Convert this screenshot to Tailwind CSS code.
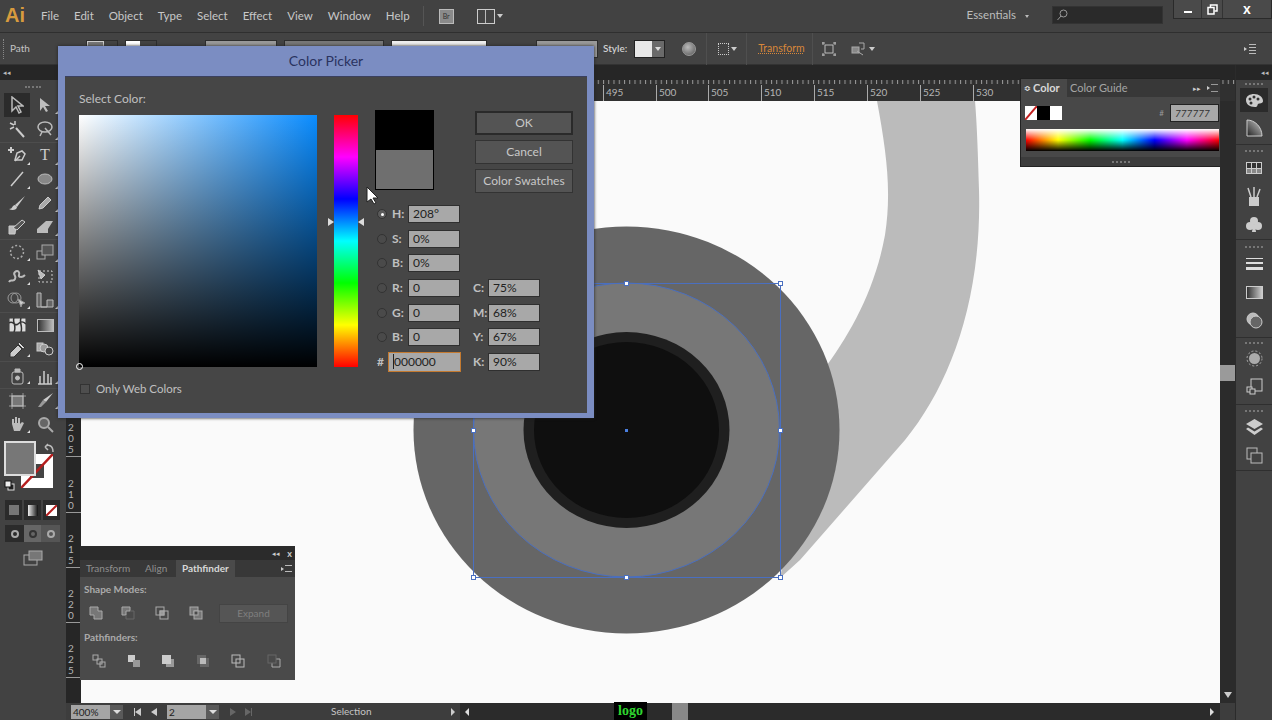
<!DOCTYPE html>
<html lang="en">
<head>
  <meta charset="UTF-8">
  <title>Color Picker</title>
  <script src="https://cdn.jsdelivr.net/npm/@tailwindcss/browser@4"></script>
</head>
<body class="bg-[#3f3f3f]">
<div class="relative w-[1272px] h-[720px] overflow-hidden flex flex-col bg-[#424242] text-[#c4c4c4] text-[11px] font-['Lato',sans-serif]">

  <!-- menu bar -->
  <header class="h-[33px] shrink-0 flex items-center bg-[#424242] border-b border-[#2f2f2f]">
    <span class="ml-[5px] w-[36px] text-[20px] font-bold text-[#d89b3e] leading-none font-['Liberation_Sans',sans-serif] -mt-[2px]">Ai</span>
    <nav class="flex gap-[15px] text-[11.5px] text-[#c8c8c8]">
      <span>File</span><span>Edit</span><span>Object</span><span>Type</span><span>Select</span><span>Effect</span><span>View</span><span>Window</span><span>Help</span>
    </nav>
    <div class="ml-[13px] h-[20px] w-px bg-[#555]"></div>
    <div class="ml-[15px] w-[15px] h-[15px] bg-[#8a8a8a] border border-[#bbb] text-[7px] text-[#333] flex items-center justify-center">Br</div>
    <div class="ml-[23px] w-[18px] h-[15px] border border-[#ccc] bg-[#bbb] grid grid-cols-2 gap-px">
      <span class="bg-[#444]"></span><span class="bg-[#444]"></span>
    </div>
    <span class="ml-[2px] w-0 h-0 border-x-[3px] border-x-transparent border-t-[4px] border-t-[#ccc]"></span>
    <div class="ml-auto flex items-center self-start h-full">
      <span class="text-[11.5px] text-[#bdbdbd] mt-[-2px]">Essentials</span>
      <span class="ml-[9px] w-0 h-0 border-x-[2px] border-x-transparent border-t-[3px] border-t-[#bbb]"></span>
      <div class="ml-[23px] w-[111px] h-[18px] bg-[#2a2a2a] border border-[#333] flex items-center pl-[3px] mt-[-2px]">
        <svg width="12" height="12" viewBox="0 0 12 12" fill="none" stroke="#999"><circle cx="7.5" cy="4.5" r="3.5"/><path d="M5 7 1.5 11"/></svg>
      </div>
      <div class="ml-[10px] w-[99px] h-[19px] self-start flex bg-[#4a4a4a] border border-t-0 border-[#2a2a2a] text-white">
        <div class="w-[27px] flex items-center justify-center"><span class="block w-[8px] h-[2px] bg-white mt-[5px]"></span></div>
        <div class="w-[22px] flex items-center justify-center border-x border-[#333]">
          <svg width="11" height="11" viewBox="0 0 11 11" fill="none" stroke="#fff" stroke-width="1.5"><path d="M3.5 3V1h6.500v6H7.500"/><rect x="1" y="3.500" width="6" height="6.500"/></svg>
        </div>
        <div class="flex-1 flex items-center justify-center text-[14px] font-bold leading-none font-['Liberation_Sans',sans-serif]">x</div>
      </div>
    </div>
  </header>

  <!-- control bar -->
  <div class="h-[32px] shrink-0 flex items-center bg-[#434343] border-b border-[#333] relative">
    <span class="ml-[3px] w-[2px] h-[20px] border-l border-dotted border-[#888]"></span>
    <span class="ml-[5px] text-[10px] text-[#c4c4c4]">Path</span>
    <div class="ml-[56px] flex h-[18px] w-[32px] border border-[#2d2d2d]"><span class="w-[17px] bg-[#777] border border-[#ccc]"></span></div>
    <div class="ml-[7px] flex h-[18px] w-[32px] border border-[#2d2d2d]"><span class="w-[14px] bg-white"></span></div>
    <div class="ml-[48px] h-[18px] w-[72px] bg-[#999] border border-[#2d2d2d]"></div>
    <div class="ml-[7px] h-[18px] w-[100px] bg-[#777] border border-[#2d2d2d]"></div>
    <div class="ml-[7px] h-[18px] w-[96px] bg-[#eee] border border-[#2d2d2d]"></div>
    <div class="ml-[49px] h-[18px] w-[62px] bg-[#999] border border-[#2d2d2d]"></div>
    <span class="ml-[5px] text-[10px] text-[#d0d0d0] font-semibold">Style:</span>
    <div class="ml-[7px] flex h-[18px] w-[31px] border border-[#222]">
      <span class="w-[17px] bg-[#e8e8e8]"></span>
      <span class="flex-1 bg-[#6a6a6a] flex items-center justify-center"><span class="w-0 h-0 border-x-[3px] border-x-transparent border-t-[4px] border-t-[#ddd]"></span></span>
    </div>
    <div class="ml-[17px] w-[14px] h-[14px] rounded-full bg-[radial-gradient(circle_at_40%_35%,#bbb,#555)] border border-[#999]"></div>
    <span class="ml-[10px] h-[32px] w-px bg-[#4f4f4f]"></span>
    <div class="ml-[11px] w-[11px] h-[12px] border border-dotted border-[#ccc]"></div>
    <span class="ml-[2px] w-0 h-0 border-x-[3px] border-x-transparent border-t-[4px] border-t-[#ccc]"></span>
    <span class="ml-[9px] h-[32px] w-px bg-[#4f4f4f]"></span>
    <span class="ml-[11px] text-[10.5px] text-[#d8873a] underline decoration-dotted">Transform</span>
    <span class="ml-[7px] h-[32px] w-px bg-[#4f4f4f]"></span>
    <svg class="ml-[9px]" width="14" height="14" viewBox="0 0 14 14" fill="none" stroke="#bbb"><rect x="3" y="3" width="8" height="8"/><path d="M0 1h3M1 0v3M11 1h3M13 0v3M0 13h3M1 11v3M11 13h3M13 11v3"/></svg>
    <svg class="ml-[15px]" width="15" height="14" viewBox="0 0 15 14" fill="none" stroke="#aaa"><rect x="1" y="5" width="7" height="6" fill="#888"/><path d="M8 1h5v6h-3M6 9l6 4"/></svg>
    <span class="ml-[3px] w-0 h-0 border-x-[3px] border-x-transparent border-t-[4px] border-t-[#ccc]"></span>
    <div class="ml-auto mr-[16px] flex items-center gap-[2px]">
      <span class="w-0 h-0 border-y-[2px] border-y-transparent border-l-[3px] border-l-[#ccc]"></span>
      <span class="flex flex-col gap-[2px]"><span class="block w-[7px] h-px bg-[#bbb]"></span><span class="block w-[7px] h-px bg-[#bbb]"></span><span class="block w-[7px] h-px bg-[#bbb]"></span><span class="block w-[7px] h-px bg-[#bbb]"></span></span>
    </div>
  </div>

  <div class="flex-1 flex min-h-0">
    <!-- tools -->
    <aside class="w-[66px] shrink-0 bg-[#424242] flex flex-col">
      <div class="h-[15px] bg-[#262626] text-[7px] text-[#bbb] pl-[3px] leading-[14px]">◂◂</div>
      <div class="h-[13px] flex justify-center items-center"><span class="w-[16px] h-[2px] border-t-2 border-dotted border-[#777]"></span></div>
      <div class="flex flex-col pt-[0px] text-[#bdbdbd]">
        <div class="grid grid-cols-[34px_22px] auto-rows-[24px] border-b border-[#4d4d4d] justify-items-center items-center pb-[1px]">
          <div class="w-[26px] h-[24px] bg-[#2b2b2b] flex items-center justify-center"><svg width="14" height="18" viewBox="0 0 14 18" fill="none" stroke="#bbb" stroke-width="1.500"><path d="M2 1v14l4-4 3 6 2-1-3-6h5z"/></svg></div>
          <svg width="14" height="16" viewBox="0 0 14 16" fill="#bdbdbd"><path d="M2 1v13l3-4 3 5 2-1-3-5h5z"/></svg>
          <svg width="18" height="18" viewBox="0 0 18 18" fill="none" stroke="#ccc" stroke-width="2"><path d="M8 8l8 9"/><path d="M2 3l4 2M7 1v4M2 9l4-2" stroke-width="1.500"/></svg>
          <svg width="18" height="16" viewBox="0 0 18 16" fill="none" stroke="#bbb" stroke-width="1.500"><ellipse cx="9" cy="6" rx="7" ry="5"/><path d="M9 7l6 7M6 11l-2 4"/></svg>
        </div>
        <div class="grid grid-cols-[34px_22px] auto-rows-[24px] border-b border-[#4d4d4d] justify-items-center items-center">
          <svg width="20" height="18" viewBox="0 0 20 18" fill="none" stroke="#ccc" stroke-width="1.500"><path d="M1 4h6M4 1v6" stroke-width="2"/><path d="M8 14l2-7 5-2 3 3-3 6z"/><path d="M8 15l5-5"/></svg>
          <span class="text-[16px] leading-none font-['Liberation_Serif',serif] text-[#ccc]">T</span>
          <svg width="16" height="16" viewBox="0 0 16 16" stroke="#ccc" stroke-width="1.500"><path d="M2 15 14 1"/></svg>
          <svg width="16" height="12" viewBox="0 0 16 12" fill="#888" stroke="#bbb"><ellipse cx="8" cy="6" rx="7" ry="5"/></svg>
          <svg width="18" height="16" viewBox="0 0 18 16" fill="#ccc"><path d="M17 1 7 10l2 2z"/><path d="M7 10c-3 0-2 4-6 4 3 2 8 1 8-2z"/></svg>
          <svg width="16" height="16" viewBox="0 0 16 16" fill="#aaa" stroke="#ccc"><path d="M2 14l1-4 8-8 3 3-8 8z"/></svg>
          <svg width="18" height="16" viewBox="0 0 18 16" fill="#bbb" stroke="#ccc"><path d="M1 7h7l-1 8H1z"/><path d="M5 9l9-8 3 2-8 8z" fill="#555"/></svg>
          <svg width="18" height="14" viewBox="0 0 18 14" fill="#bbb"><path d="M1 9l9-8h7l-5 8v4H1z"/></svg>
        </div>
        <div class="grid grid-cols-[34px_22px] auto-rows-[24px] border-b border-[#4d4d4d] justify-items-center items-center">
          <svg width="16" height="16" viewBox="0 0 16 16" fill="none" stroke="#aaa" stroke-width="1.500" stroke-dasharray="2 2"><circle cx="8" cy="8" r="6.500"/></svg>
          <svg width="18" height="16" viewBox="0 0 18 16" fill="none" stroke="#aaa"><rect x="1" y="7" width="8" height="8"/><rect x="6" y="1" width="11" height="10" fill="#555"/></svg>
          <svg width="18" height="16" viewBox="0 0 18 16" fill="none" stroke="#bbb" stroke-width="2"><path d="M1 14c2-4 4 1 6-3s-3-4 0-7 5 1 4 3 3 3 6 0"/></svg>
          <svg width="18" height="16" viewBox="0 0 18 16" fill="none" stroke="#ccc"><rect x="3" y="3" width="13" height="11" stroke-dasharray="2 2"/><path d="M2 2l7 5-4 4z" fill="#bbb"/></svg>
          <svg width="20" height="16" viewBox="0 0 20 16" fill="none" stroke="#999"><circle cx="6" cy="6" r="5"/><circle cx="9" cy="6" r="5"/><path d="M11 7l7 4-3 1-1 3z" fill="#ccc"/></svg>
          <svg width="18" height="16" viewBox="0 0 18 16" fill="none" stroke="#bbb"><path d="M1 15V1h4v14h6V8h6v7z" fill="#666"/></svg>
        </div>
        <div class="grid grid-cols-[34px_22px] auto-rows-[24px] border-b border-[#4d4d4d] justify-items-center items-center">
          <svg width="17" height="14" viewBox="0 0 17 14" fill="#ddd" stroke="#333"><rect width="17" height="14"/><path d="M0 5c4-3 6 4 9 1s5-3 8 0M5 0c-2 4 3 8 0 14M12 0c-2 5 2 8 0 14" fill="none" stroke-width="1.500"/></svg>
          <div class="w-[17px] h-[13px] border border-[#bbb] bg-[linear-gradient(to_right,#333,#bbb)]"></div>
          <svg width="17" height="17" viewBox="0 0 17 17" fill="#ccc" stroke="#333"><path d="M9 4l4 4-8 8H1v-4z"/><path d="M10 1l6 6-2 1-5-5z" fill="#ddd"/></svg>
          <svg width="18" height="14" viewBox="0 0 18 14" fill="#999" stroke="#ccc"><rect x="1" y="1" width="6" height="8" fill="#aaa"/><circle cx="8" cy="6" r="4"/><circle cx="13" cy="9" r="4" fill="#444"/></svg>
        </div>
        <div class="grid grid-cols-[34px_22px] h-[27px] border-b border-[#4d4d4d] justify-items-center items-end pb-[3px]">
          <svg width="13" height="17" viewBox="0 0 13 17" fill="none" stroke="#bbb"><rect x="1" y="4" width="11" height="12" rx="2"/><circle cx="6.500" cy="10" r="2" fill="#bbb"/><path d="M4 1h5v3H4z" fill="#bbb"/></svg>
          <svg width="16" height="16" viewBox="0 0 16 16" fill="none" stroke="#ccc" stroke-width="1.500"><path d="M1 15h14M3 15V7M7 15V2M11 15V5M14 15V8"/></svg>
        </div>
        <div class="grid grid-cols-[34px_22px] h-[23px] justify-items-center items-center">
          <svg width="17" height="16" viewBox="0 0 17 16" fill="#777" stroke="#bbb"><rect x="3" y="3" width="11" height="10"/><path d="M0 3h17M0 13h17M3 0v16M14 0v16" stroke-width=".7"/></svg>
          <svg width="17" height="15" viewBox="0 0 17 15" fill="#ccc"><path d="M16 0 6 7l3 2z"/><path d="M6 7 1 14h3l5-5z" fill="#999"/></svg>
        </div>
        <div class="grid grid-cols-[34px_22px] h-[24px] justify-items-center items-center">
          <svg width="17" height="18" viewBox="0 0 17 18" fill="#bbb"><path d="M3 9V4h2v4h1V2h2v6h1V3h2v6l2-2 2 1-4 8H5z"/></svg>
          <svg width="17" height="17" viewBox="0 0 17 17" fill="none" stroke="#aaa" stroke-width="2"><circle cx="7" cy="7" r="5" fill="#666"/><path d="M11 11l5 5"/></svg>
        </div>
        <!-- fill and stroke -->
        <div class="relative h-[58px] mt-[5px]">
          <div class="absolute left-[21px] top-[13px] w-[32px] h-[34px] bg-white flex items-center justify-center">
            <span class="w-[14px] h-[14px] bg-[#444]"></span>
            <svg class="absolute inset-0" width="32" height="34" viewBox="0 0 32 34"><path d="M0 34 32 0" stroke="#b51d1d" stroke-width="2.500"/></svg>
          </div>
          <div class="absolute left-[4px] top-0 w-[32px] h-[35px] bg-[#777] border-2 border-[#ddd]"></div>
          <svg class="absolute left-[44px] top-[2px]" width="12" height="11" viewBox="0 0 12 11" fill="none" stroke="#bbb" stroke-width="1.500"><path d="M1 4c3-3 8-2 8 5M1 4l3-3M1 4l3 3"/></svg>
          <svg class="absolute left-[4px] top-[39px]" width="11" height="11" viewBox="0 0 11 11" stroke="#111" fill="#eee"><rect x="4" y="4" width="6" height="6" fill="#222" stroke="#ddd"/><rect x="1" y="1" width="6" height="6"/></svg>
        </div>
        <div class="flex gap-[2px] pl-[5px] h-[20px] mt-[1px]">
          <div class="w-[17px] bg-[#2b2b2b] flex items-center justify-center"><span class="w-[10px] h-[10px] bg-[#777]"></span></div>
          <div class="w-[17px] bg-[#2b2b2b] flex items-center justify-center"><span class="w-[10px] h-[11px] bg-[linear-gradient(to_right,#eee,#111)]"></span></div>
          <div class="w-[17px] bg-[#2b2b2b] flex items-center justify-center"><svg width="11" height="11"><rect width="11" height="11" fill="#fff"/><path d="M0 11 11 0" stroke="#b51d1d" stroke-width="2"/></svg></div>
        </div>
        <div class="flex pl-[5px] h-[17px] mt-[5px]">
          <div class="w-[19px] bg-[#2b2b2b] flex items-center justify-center"><span class="w-[8px] h-[8px] rounded-full border-2 border-[#aaa]"></span></div>
          <div class="w-[17px] bg-[#666] flex items-center justify-center"><span class="w-[8px] h-[8px] rounded-full border-2 border-[#333]"></span></div>
          <div class="w-[19px] bg-[#555] flex items-center justify-center"><span class="w-[8px] h-[8px] rounded-full border-2 border-[#aaa]"></span></div>
        </div>
        <div class="flex justify-center mt-[8px]">
          <svg width="20" height="16" viewBox="0 0 20 16" stroke="#aaa" fill="#777"><rect x="1" y="5" width="13" height="10" fill="#424242"/><rect x="6" y="1" width="13" height="9"/></svg>
        </div>
      </div>
    </aside>

    <!-- document window -->
    <main class="flex-1 min-w-0 flex flex-col bg-[#262626]">
      <div class="h-[15px] shrink-0 bg-[#262626]"></div>
      <svg class="h-[21px] w-full shrink-0 bg-[#303030]" viewBox="66 80 1169 21" width="1169" height="21">
        <defs>
          <pattern id="rt" x="603" y="0" width="5.25" height="21" patternUnits="userSpaceOnUse"><path d="M.5 17v4" stroke="#999"/></pattern>
        </defs>
        <rect x="66" y="80" width="1169" height="21" fill="url(#rt)"/>
        <g stroke="#aaa"><path d="M603.500 85v16M656.500 85v16M708.500 85v16M761.500 85v16M814.500 85v16M867.500 85v16M920.500 85v16M973.500 85v16"/></g>
        <g fill="#b5b5b5" font-size="10" font-family="Lato,sans-serif">
          <text x="606" y="96">495</text><text x="659" y="96">500</text><text x="711" y="96">505</text><text x="764" y="96">510</text><text x="817" y="96">515</text><text x="870" y="96">520</text><text x="923" y="96">525</text><text x="976" y="96">530</text>
        </g>
      </svg>
      <div class="flex-1 min-h-0 flex">
        <svg class="w-[15px] shrink-0 bg-[#262626]" width="15" height="602" viewBox="66 101 15 602">
          <g stroke="#999"><path d="M66 456.500h15M66 512.500h15M66 567.500h15M66 622.500h15M66 677.500h15"/></g>
          <g fill="#b5b5b5" font-size="10" font-family="Lato,sans-serif" text-anchor="middle">
            <text x="71" y="431">2</text><text x="71" y="442">0</text><text x="71" y="453">5</text>
            <text x="71" y="487">2</text><text x="71" y="498">1</text><text x="71" y="509">0</text>
            <text x="71" y="542">2</text><text x="71" y="553">1</text><text x="71" y="564">5</text>
            <text x="71" y="597">2</text><text x="71" y="608">2</text><text x="71" y="619">0</text>
            <text x="71" y="652">2</text><text x="71" y="663">2</text><text x="71" y="674">5</text>
          </g>
        </svg>
        <div class="flex-1 min-w-0 bg-[#fafafa]">
          <svg class="block" width="1139" height="602" viewBox="81 101 1139 602">
            <path d="M877 101C886 150 892 190 885 235 875 290 850 335 822 372L780 578 800 560 905 440C950 385 982 300 979 190 978 155 977 125 975 101Z" fill="#bbbbbb"/>
            <ellipse cx="626.500" cy="430" rx="213" ry="203.500" fill="#666666"/>
            <ellipse cx="626.500" cy="430" rx="153" ry="147" fill="#777777" stroke="#4a6fc0"/>
            <ellipse cx="626.500" cy="430" rx="103" ry="98" fill="#1f1f1f"/>
            <ellipse cx="626.500" cy="430" rx="92.500" ry="88" fill="#0f0f0f"/>
            <path d="M473.500 283.500H780.500V577.500H473.500Z" fill="none" stroke="#4a6fc0"/>
            <g fill="#fff" stroke="#4a6fc0">
              <rect x="471.500" y="281.500" width="4" height="4"/><rect x="624.500" y="281.500" width="4" height="4"/><rect x="778.500" y="281.500" width="4" height="4"/>
              <rect x="471.500" y="428.500" width="4" height="4"/><rect x="778.500" y="428.500" width="4" height="4"/>
              <rect x="471.500" y="575.500" width="4" height="4"/><rect x="624.500" y="575.500" width="4" height="4"/><rect x="778.500" y="575.500" width="4" height="4"/>
            </g>
            <rect x="625" y="429" width="3" height="3" fill="#4a7fe0"/>
          </svg>
        </div>
        <div class="w-[15px] shrink-0 bg-[#2b2b2b] flex flex-col items-center pt-[264px]">
          <div class="w-[15px] h-[16px] bg-[#9a9a9a]"></div>
          <span class="mt-auto mb-[5px] w-0 h-0 border-x-[4px] border-x-transparent border-t-[6px] border-t-[#ccc]"></span>
        </div>
      </div>
      <!-- status bar -->
      <div class="h-[17px] shrink-0 flex items-center bg-[#2b2b2b] text-[#bbb] text-[10px]">
        <div class="w-[394px] h-full bg-[#3d3d3d] flex items-center shrink-0">
          <div class="ml-[5px] w-[39px] h-[14px] bg-[#a5a5a5] text-[#222] pl-[2px] leading-[14px]">400%</div>
          <div class="w-[13px] h-[14px] bg-[#5a5a5a] flex items-center justify-center"><span class="w-0 h-0 border-x-[4px] border-x-transparent border-t-[4px] border-t-[#ddd]"></span></div>
          <span class="ml-[11px] w-px h-[8px] bg-[#ccc]"></span>
          <span class="w-0 h-0 border-y-[4px] border-y-transparent border-r-[6px] border-r-[#ccc]"></span>
          <span class="ml-[10px] w-0 h-0 border-y-[4px] border-y-transparent border-r-[6px] border-r-[#ccc]"></span>
          <div class="ml-[10px] w-[39px] h-[14px] bg-[#a5a5a5] text-[#222] pl-[2px] leading-[14px]">2</div>
          <div class="w-[13px] h-[14px] bg-[#5a5a5a] flex items-center justify-center"><span class="w-0 h-0 border-x-[4px] border-x-transparent border-t-[4px] border-t-[#ddd]"></span></div>
          <span class="ml-[11px] w-0 h-0 border-y-[4px] border-y-transparent border-l-[6px] border-l-[#666]"></span>
          <span class="ml-[9px] w-0 h-0 border-y-[4px] border-y-transparent border-l-[6px] border-l-[#666]"></span>
          <span class="w-px h-[8px] bg-[#666]"></span>
          <span class="ml-[79px] text-[#c4c4c4]">Selection</span>
          <span class="ml-auto mr-[5px] w-0 h-0 border-y-[4px] border-y-transparent border-l-[4px] border-l-[#ccc]"></span>
        </div>
        <span class="ml-[5px] w-0 h-0 border-y-[4px] border-y-transparent border-r-[4px] border-r-[#ddd]"></span>
        <div class="ml-[145px] w-[33px] h-[18px] -mt-[1px] bg-black text-[#2fd42f] text-[14px] font-bold text-center leading-[17px] font-['Liberation_Serif',serif]">logo</div>
        <div class="ml-[25px] w-[16px] h-full bg-[#888]"></div>
        <span class="ml-auto mr-[6px] w-0 h-0 border-y-[4px] border-y-transparent border-l-[4px] border-l-[#ddd]"></span>
        <div class="w-[15px] h-full bg-[#3d3d3d]"></div>
      </div>
    </main>

    <!-- right dock -->
    <aside class="w-[37px] shrink-0 bg-[#424242] flex flex-col items-center border-l border-[#2b2b2b]">
      <div class="h-[15px] w-full bg-[#262626] text-[7px] text-[#bbb] text-right pr-[3px] leading-[14px]">◂◂</div>
      <div class="w-full h-[65px] flex flex-col items-center border-b border-[#2f2f2f] pt-[3px]">
        <span class="w-[18px] border-t-2 border-dotted border-[#777]"></span>
        <div class="mt-[3px] w-[28px] h-[24px] bg-[#2b2b2b] flex items-center justify-center">
          <svg width="19" height="15" viewBox="0 0 19 15" fill="#ccc"><path d="M9 1c5 0 9 3 9 7 0 3-4 2-5 3s0 3-3 3C4 14 1 11 1 7s4-6 8-6z"/><g fill="#333"><circle cx="5" cy="6" r="1.500"/><circle cx="9" cy="4" r="1.500"/><circle cx="13" cy="6" r="1.500"/><circle cx="6" cy="10" r="1.500"/></g></svg>
        </div>
        <svg class="mt-[7px]" width="17" height="18" viewBox="0 0 17 18"><defs><linearGradient id="dg" x1="0" x2="1" y1="1" y2="0"><stop offset="0" stop-color="#222"/><stop offset="1" stop-color="#ccc"/></linearGradient></defs><path d="M1 1c8 0 15 7 15 16H1z" fill="url(#dg)" stroke="#ccc"/></svg>
      </div>
      <div class="w-full h-[95px] flex flex-col items-center border-b border-[#2f2f2f] pt-[5px]">
        <span class="w-[18px] border-t-2 border-dotted border-[#777]"></span>
        <div class="mt-[10px] w-[16px] h-[12px] border border-[#ccc] grid grid-cols-3 gap-px bg-[#ccc]"><span class="bg-[#333]"></span><span class="bg-[#333]"></span><span class="bg-[#333]"></span><span class="bg-[#888]"></span><span class="bg-[#888]"></span><span class="bg-[#888]"></span></div>
        <svg class="mt-[13px]" width="16" height="20" viewBox="0 0 16 20" fill="#ccc"><rect x="3" y="10" width="10" height="9"/><path d="M5 10 2 1M8 10V0M11 10l3-8" stroke="#ccc" stroke-width="1.500"/></svg>
        <svg class="mt-[9px]" width="16" height="17" viewBox="0 0 16 17" fill="#ccc"><circle cx="8" cy="5" r="4"/><circle cx="4" cy="10" r="4"/><circle cx="12" cy="10" r="4"/><path d="M7 9h2l1 7H6z"/></svg>
      </div>
      <div class="w-full h-[98px] flex flex-col items-center border-b border-[#2f2f2f] pt-[6px]">
        <span class="w-[18px] border-t-2 border-dotted border-[#777]"></span>
        <div class="mt-[10px] w-[17px] flex flex-col gap-[3px]"><span class="h-px bg-[#ddd]"></span><span class="h-[2px] bg-[#ddd]"></span><span class="h-[3px] bg-[#ddd]"></span></div>
        <div class="mt-[16px] w-[17px] h-[13px] border border-[#ccc] bg-[linear-gradient(to_right,#333,#ccc)]"></div>
        <svg class="mt-[13px]" width="17" height="17" viewBox="0 0 17 17" fill="#999" stroke="#ccc"><circle cx="7" cy="7" r="6" fill="#bbb"/><circle cx="10" cy="10" r="6" fill="#666"/></svg>
      </div>
      <div class="w-full h-[67px] flex flex-col items-center border-b border-[#2f2f2f] pt-[4px]">
        <span class="w-[18px] border-t-2 border-dotted border-[#777]"></span>
        <svg class="mt-[6px]" width="17" height="17" viewBox="0 0 17 17"><circle cx="8.500" cy="8.500" r="5.500" fill="#aaa"/><circle cx="8.500" cy="8.500" r="7.500" fill="none" stroke="#aaa" stroke-dasharray="2 2"/></svg>
        <svg class="mt-[11px]" width="17" height="17" viewBox="0 0 17 17" fill="none" stroke="#ccc"><rect x="5" y="1" width="11" height="12"/><rect x="1" y="9" width="5" height="5" fill="#424242"/><rect x="4" y="11" width="5" height="5" fill="#424242"/></svg>
      </div>
      <div class="w-full h-[66px] flex flex-col items-center border-b border-[#2f2f2f] pt-[5px]">
        <span class="w-[18px] border-t-2 border-dotted border-[#777]"></span>
        <svg class="mt-[7px]" width="17" height="16" viewBox="0 0 17 16" fill="#ccc"><path d="M8.500 0 17 5l-8.500 5L0 5z"/><path d="M2 8.500l6.500 4 6.500-4 2 1.500-8.500 6L0 10z"/></svg>
        <svg class="mt-[12px]" width="17" height="17" viewBox="0 0 17 17" fill="#424242" stroke="#bbb"><rect x="1" y="1" width="10" height="11"/><rect x="5" y="6" width="11" height="10"/></svg>
      </div>
    </aside>
  </div>

  <!-- flyout marks on the tool buttons -->
  <svg class="absolute left-0 top-0 pointer-events-none" width="66" height="440" viewBox="0 0 66 440" fill="#ddd">
    <path d="M58 111v3h-3zM58 137v3h-3zM30 162v3h-3zM58 162v3h-3zM30 186v3h-3zM58 186v3h-3zM58 209v3h-3zM58 233v3h-3zM30 258v3h-3zM58 259v3h-3zM30 282v3h-3zM30 306v3h-3zM58 306v3h-3zM30 354v3h-3zM30 381v3h-3zM58 381v3h-3zM58 406v3h-3zM30 430v3h-3z"/>
  </svg>

  <!-- color panel -->
  <div class="absolute left-[1020px] top-[78px] w-[200px] h-[89px] bg-[#484848] border border-[#222] border-r-0 flex flex-col">
    <div class="h-[18px] flex items-center bg-[#383838] text-[11px]">
      <div class="h-full w-[46px] bg-[#484848] flex items-center pl-[3px] text-[#d8d8d8] font-bold"><span class="text-[8px] mr-[2px]">≎</span>Color</div>
      <span class="ml-[3px] text-[#a5a5a5]">Color Guide</span>
      <span class="ml-auto text-[7px] text-[#ccc]">▸▸</span>
      <div class="ml-[6px] mr-[2px] flex items-center gap-px">
        <span class="w-0 h-0 border-y-[2px] border-y-transparent border-l-[3px] border-l-[#ccc]"></span>
        <span class="w-[7px] h-[8px] border-y border-[#999]"></span>
      </div>
    </div>
    <div class="h-[32px] flex items-center pl-[4px] pr-[1px]">
      <svg width="12" height="14"><rect width="12" height="14" fill="#fff"/><path d="M0 14 12 0" stroke="#c42020" stroke-width="2"/></svg>
      <span class="w-[13px] h-[14px] bg-black"></span>
      <span class="w-[12px] h-[14px] bg-white"></span>
      <span class="ml-auto text-[#999] text-[8px]">#</span>
      <div class="ml-[6px] w-[49px] h-[18px] bg-[#a8a8a8] border border-[#222] text-[#333] italic text-[10px] leading-[16px] pl-[4px]">777777</div>
    </div>
    <div class="ml-[5px] mr-px h-[22px] bg-[linear-gradient(to_bottom,#fff,transparent_50%,#000),linear-gradient(to_right,#f00,#ff0,#0f0,#0ff,#00f,#f0f,#f00)]"></div>
    <div class="mt-auto h-[9px] bg-[#3c3c3c] flex justify-center items-center"><span class="w-[18px] border-t-2 border-dotted border-[#777]"></span></div>
  </div>

  <!-- pathfinder panel -->
  <div class="absolute left-[80px] top-[546px] w-[215px] h-[134px] bg-[#4a4a4a] flex flex-col text-[#b5b5b5]">
    <div class="h-[14px] bg-[#2b2b2b] flex items-center justify-end gap-[7px] pr-[3px] text-[7px] text-[#ccc]">
      <span>◂◂</span><span class="text-[9px] font-bold leading-none">x</span>
    </div>
    <div class="h-[17px] flex items-center bg-[#383838] text-[10px]">
      <span class="pl-[6px] w-[65px] text-[#8f8f8f]">Transform</span>
      <span class="w-[31px] text-[#8f8f8f]">Align</span>
      <span class="h-full w-[59px] bg-[#4a4a4a] text-[#d8d8d8] font-bold pl-[6px] leading-[17px]">Pathfinder</span>
      <div class="ml-auto mr-[3px] flex items-center gap-px">
        <span class="w-0 h-0 border-y-[2px] border-y-transparent border-l-[3px] border-l-[#ccc]"></span>
        <span class="w-[7px] h-[7px] border-y border-[#bbb]"></span>
      </div>
    </div>
    <div class="pl-[4px] mt-[6px] text-[10px] font-bold text-[#aaa] leading-[12px]">Shape Modes:</div>
    <div class="flex items-center h-[20px] mt-[8px]">
      <svg class="ml-[9px]" width="14" height="14" viewBox="0 0 14 14" fill="#777" stroke="#aaa"><path d="M1 1h8v4h4v8H5V9H1z"/></svg>
      <svg class="ml-[18px]" width="14" height="14" viewBox="0 0 14 14" fill="none" stroke="#aaa"><path d="M1 1h8v4H5v4H1z" fill="#777"/><path d="M9 5h4v8H5V9" stroke="#666"/></svg>
      <svg class="ml-[20px]" width="14" height="14" viewBox="0 0 14 14" fill="none" stroke="#aaa"><rect x="1" y="1" width="8" height="8"/><rect x="5" y="5" width="8" height="8"/><rect x="5" y="5" width="4" height="4" fill="#999"/></svg>
      <svg class="ml-[20px]" width="14" height="14" viewBox="0 0 14 14" fill="#777" stroke="#aaa"><rect x="1" y="1" width="8" height="8"/><rect x="5" y="5" width="8" height="8"/><rect x="5" y="5" width="4" height="4" fill="#4a4a4a"/></svg>
      <div class="ml-[16px] w-[69px] h-[19px] bg-[#555] border border-[#444] text-[#7f7f7f] text-[10px] text-center leading-[17px]">Expand</div>
    </div>
    <div class="pl-[4px] mt-[8px] text-[10px] font-bold text-[#aaa] leading-[12px]">Pathfinders:</div>
    <div class="flex items-center mt-[11px]">
      <svg class="ml-[12px]" width="14" height="14" viewBox="0 0 14 14" fill="none" stroke="#aaa"><rect x="1" y="1" width="5" height="5"/><rect x="5" y="5" width="5" height="5"/><rect x="8" y="8" width="5" height="5"/></svg>
      <svg class="ml-[21px]" width="14" height="14" viewBox="0 0 14 14" fill="#ccc"><rect x="1" y="1" width="7" height="7"/><rect x="6" y="6" width="7" height="7" fill="#999"/></svg>
      <svg class="ml-[20px]" width="14" height="14" viewBox="0 0 14 14" fill="#ccc"><rect x="1" y="1" width="9" height="9"/><path d="M10 5h3v8H5v-3h5z" fill="#999"/></svg>
      <svg class="ml-[21px]" width="14" height="14" viewBox="0 0 14 14" fill="#666"><rect x="1" y="1" width="9" height="9"/><rect x="4" y="4" width="9" height="9"/><rect x="4" y="4" width="6" height="6" fill="#bbb"/></svg>
      <svg class="ml-[21px]" width="14" height="14" viewBox="0 0 14 14" fill="none" stroke="#bbb"><rect x="1" y="1" width="8" height="8"/><rect x="5" y="5" width="8" height="8"/></svg>
      <svg class="ml-[22px]" width="14" height="14" viewBox="0 0 14 14" fill="none" stroke="#aaa"><path d="M9 5h4v8H5V9"/><rect x="1" y="1" width="8" height="8" stroke="#666"/></svg>
    </div>
  </div>

  <!-- color picker dialog -->
  <div class="absolute left-[58px] top-[46px] w-[536px] h-[372px] bg-[#7b8dc2] flex flex-col px-[7px] pb-[5px] shadow-[0_0_3px_#222] font-['Lato',sans-serif]">
    <div class="h-[30px] shrink-0 flex items-center justify-center text-[#2a3360] text-[14px] pb-[1px]">Color Picker</div>
    <div class="flex-1 flex bg-[#464646] text-[#c0c0c0] border-t border-[#3a4060]">
      <div class="w-[269px] shrink-0 pl-[14px] pt-[14px]">
        <div class="text-[12px] h-[24px] leading-[15px]">Select Color:</div>
        <div class="relative w-[238px] h-[252px] bg-[linear-gradient(to_top,#000,transparent),linear-gradient(to_right,#fff,#0a8cff)]">
          <span class="absolute left-[-3px] bottom-[-3px] w-[7px] h-[7px] rounded-full border border-white"></span>
        </div>
        <div class="mt-[13px] flex items-center gap-[6px] text-[11.5px]">
          <span class="ml-[1px] w-[10px] h-[10px] border border-[#333] bg-[#4e4e4e]"></span>Only Web Colors
        </div>
      </div>
      <div class="relative mt-[38px] w-[24px] h-[252px] shrink-0 bg-[linear-gradient(to_bottom,#f00,#f0f,#00f,#0ff,#0f0,#ff0,#f00)]">
        <span class="absolute left-[-6px] top-[103px] w-0 h-0 border-y-[4px] border-y-transparent border-l-[6px] border-l-[#ddd]"></span>
        <span class="absolute right-[-6px] top-[103px] w-0 h-0 border-y-[4px] border-y-transparent border-r-[6px] border-r-[#ddd]"></span>
      </div>
      <div class="ml-[17px] flex-1 flex flex-col">
        <div class="flex">
          <div class="mt-[33px] w-[59px] h-[80px] flex flex-col border border-black">
            <span class="h-[39px] bg-black"></span><span class="flex-1 bg-[#6f6f6f]"></span>
          </div>
          <div class="ml-[41px] mt-[34px] w-[98px] flex flex-col gap-[5px] text-[12px] text-[#c8c8c8]">
            <div class="h-[24px] bg-[#545454] border-2 border-[#2a2a2a] flex items-center justify-center">OK</div>
            <div class="h-[24px] bg-[#545454] border border-[#333] flex items-center justify-center">Cancel</div>
            <div class="h-[24px] bg-[#545454] border border-[#333] flex items-center justify-center">Color Swatches</div>
          </div>
        </div>
        <div class="mt-[12px] flex flex-col gap-[6.700px] text-[12px] font-bold leading-[18px]">
          <div class="flex items-center h-[18px]">
            <span class="ml-[2px] w-[10px] h-[10px] rounded-full border border-[#333] bg-[#5a5a5a] flex items-center justify-center"><span class="w-[3px] h-[3px] rounded-full bg-white"></span></span>
            <span class="ml-[5px] w-[16px]">H:</span><span class="w-[52px] h-[18px] bg-[#a8a8a8] border border-[#2f2f2f] text-[#222] font-normal pl-[4px] leading-[16px]">208°</span>
          </div>
          <div class="flex items-center h-[18px]">
            <span class="ml-[2px] w-[10px] h-[10px] rounded-full border border-[#333] bg-[#4a4a4a]"></span>
            <span class="ml-[5px] w-[16px]">S:</span><span class="w-[52px] h-[18px] bg-[#a8a8a8] border border-[#2f2f2f] text-[#222] font-normal pl-[4px] leading-[16px]">0%</span>
          </div>
          <div class="flex items-center h-[18px]">
            <span class="ml-[2px] w-[10px] h-[10px] rounded-full border border-[#333] bg-[#4a4a4a]"></span>
            <span class="ml-[5px] w-[16px]">B:</span><span class="w-[52px] h-[18px] bg-[#a8a8a8] border border-[#2f2f2f] text-[#222] font-normal pl-[4px] leading-[16px]">0%</span>
          </div>
          <div class="flex items-center h-[18px]">
            <span class="ml-[2px] w-[10px] h-[10px] rounded-full border border-[#333] bg-[#4a4a4a]"></span>
            <span class="ml-[5px] w-[16px]">R:</span><span class="w-[52px] h-[18px] bg-[#a8a8a8] border border-[#2f2f2f] text-[#222] font-normal pl-[4px] leading-[16px]">0</span>
            <span class="ml-[13px] w-[15px]">C:</span><span class="w-[52px] h-[18px] bg-[#a8a8a8] border border-[#2f2f2f] text-[#222] font-normal pl-[4px] leading-[16px]">75%</span>
          </div>
          <div class="flex items-center h-[18px]">
            <span class="ml-[2px] w-[10px] h-[10px] rounded-full border border-[#333] bg-[#4a4a4a]"></span>
            <span class="ml-[5px] w-[16px]">G:</span><span class="w-[52px] h-[18px] bg-[#a8a8a8] border border-[#2f2f2f] text-[#222] font-normal pl-[4px] leading-[16px]">0</span>
            <span class="ml-[13px] w-[15px]">M:</span><span class="w-[52px] h-[18px] bg-[#a8a8a8] border border-[#2f2f2f] text-[#222] font-normal pl-[4px] leading-[16px]">68%</span>
          </div>
          <div class="flex items-center h-[18px]">
            <span class="ml-[2px] w-[10px] h-[10px] rounded-full border border-[#333] bg-[#4a4a4a]"></span>
            <span class="ml-[5px] w-[16px]">B:</span><span class="w-[52px] h-[18px] bg-[#a8a8a8] border border-[#2f2f2f] text-[#222] font-normal pl-[4px] leading-[16px]">0</span>
            <span class="ml-[13px] w-[15px]">Y:</span><span class="w-[52px] h-[18px] bg-[#a8a8a8] border border-[#2f2f2f] text-[#222] font-normal pl-[4px] leading-[16px]">67%</span>
          </div>
          <div class="flex items-center h-[18px]">
            <span class="ml-[2px] w-[11px]">#</span>
            <span class="w-[73px] h-[20px] bg-[#a8a8a8] border border-[#c47a30] text-[#222] font-normal pl-[4px] leading-[18px] shrink-0"><span class="border-l border-[#222]">000000</span></span>
            <span class="ml-[12px] w-[15px]">K:</span><span class="w-[52px] h-[18px] bg-[#a8a8a8] border border-[#2f2f2f] text-[#222] font-normal pl-[4px] leading-[16px]">90%</span>
          </div>
        </div>
      </div>
    </div>
  </div>

  <!-- mouse pointer -->
  <svg class="absolute left-[366px] top-[186px]" width="13" height="19" viewBox="0 0 13 19" fill="#fff" stroke="#222"><path d="M1 1v15l4-3 3 5 2-1-3-5h5z"/></svg>
</div>
</body>
</html>
